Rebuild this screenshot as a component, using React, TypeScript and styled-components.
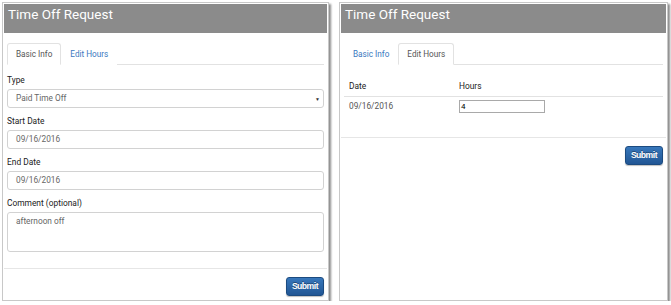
import React from "react";
import styled, { createGlobalStyle } from "styled-components";

const Global = createGlobalStyle`
  html, body { margin: 0; padding: 0; background: #fff; }
  body { font-family: Roboto, "Liberation Sans", Arial, sans-serif; }
  * { box-sizing: border-box; }
`;

const Page = styled.div`
  display: flex;
  align-items: flex-start;
  gap: 10px;
  padding: 2px 0 0 2px;
`;

const Panel = styled.div<{ $w: number }>`
  width: ${(p) => p.$w}px;
  height: 299px;
  border: 1px solid #c8c8c8;
  padding: 1px;
  background: #fff;
  box-shadow: 2px 2px 2px rgba(0, 0, 0, 0.45);
  display: flex;
  flex-direction: column;
`;

const Header = styled.div`
  height: 29px;
  background: #8b8b8b;
  color: #fff;
  font-size: 13.5px;
  font-weight: 400;
  line-height: 17px;
  padding: 2px 4px 0;
`;

const Body = styled.div`
  padding: 10px 3px 0;
`;

const Tabs = styled.div`
  display: flex;
  border-bottom: 1px solid #e2e2e2;
  height: 22px;
`;

const Tab = styled.div<{ $active?: boolean }>`
  height: 22px;
  padding: 0 8px;
  font-size: 8.2px;
  line-height: 20px;
  color: ${(p) => (p.$active ? "#555" : "#3a78c0")};
  border: 1px solid ${(p) => (p.$active ? "#e2e2e2" : "transparent")};
  border-bottom-color: ${(p) => (p.$active ? "#fff" : "transparent")};
  border-radius: 3px 3px 0 0;
  background: #fff;
`;

const Form = styled.div`
  padding: 8px 0 16px;
  display: flex;
  flex-direction: column;
  gap: 6px;
`;

const Field = styled.div`
  display: flex;
  flex-direction: column;
  gap: 2px;
`;

const Label = styled.div`
  font-size: 8.4px;
  font-weight: 400;
  color: #222;
  line-height: 14px;
`;

const Control = styled.div<{ $h?: number }>`
  position: relative;
  height: ${(p) => p.$h ?? 19}px;
  border: 1px solid #d2d2d2;
  border-radius: 3px;
  padding: 0 8px;
  font-size: 8.3px;
  line-height: 17px;
  color: #666;
`;

const Arrow = styled.span`
  position: absolute;
  right: 3px;
  top: 1px;
  font-size: 5px;
  color: #333;
`;

const Footer = styled.div`
  border-top: 1px solid #e6e6e6;
  display: flex;
  justify-content: flex-end;
  padding: 8px 3px 0;
`;

const Button = styled.div`
  height: 19px;
  padding: 0 5px;
  border: 1px solid #1c4b80;
  border-radius: 3px;
  background: linear-gradient(#3777bb, #215694);
  color: #fff;
  font-family: "Liberation Sans", Arial, sans-serif;
  font-weight: bold;
  font-size: 8.6px;
  letter-spacing: -0.5px;
  line-height: 17px;
  text-shadow: 0 -1px 0 rgba(0, 0, 0, 0.35);
  box-shadow: 0 1px 1px rgba(0, 0, 0, 0.25);
`;

const Table = styled.div`
  margin-top: 9px;
  display: grid;
  grid-template-columns: 110px 1fr;
  padding-bottom: 23px;
`;

const HeadCell = styled.div`
  font-size: 8.4px;
  font-weight: 400;
  color: #222;
  line-height: 14px;
  padding: 5px 5px 3px;
  border-bottom: 1px solid #e2e2e2;
`;

const Cell = styled.div`
  font-size: 8.3px;
  color: #555;
  line-height: 14px;
  padding: 2px 5px 0;
  height: 17px;
`;

const HoursInput = styled.div`
  width: 86px;
  height: 13px;
  border: 1px solid #a9a9a9;
  font-size: 8px;
  line-height: 11px;
  color: #000;
  padding-left: 1px;
  margin-top: 1px;
`;

export default function App() {
  return (
    <>
      <Global />
      <Page>
        <Panel $w={327}>
          <Header>Time Off Request</Header>
          <Body>
            <Tabs>
              <Tab $active>Basic Info</Tab>
              <Tab>Edit Hours</Tab>
            </Tabs>
            <Form>
              <Field>
                <Label>Type</Label>
                <Control>
                  Paid Time Off
                  <Arrow>▼</Arrow>
                </Control>
              </Field>
              <Field>
                <Label>Start Date</Label>
                <Control>09/16/2016</Control>
              </Field>
              <Field>
                <Label>End Date</Label>
                <Control>09/16/2016</Control>
              </Field>
              <Field>
                <Label>Comment (optional)</Label>
                <Control $h={40}>afternoon off</Control>
              </Field>
            </Form>
          </Body>
          <Footer>
            <Button>Submit</Button>
          </Footer>
        </Panel>
        <Panel $w={329}>
          <Header>Time Off Request</Header>
          <Body>
            <Tabs>
              <Tab>Basic Info</Tab>
              <Tab $active>Edit Hours</Tab>
            </Tabs>
            <Table>
              <HeadCell>Date</HeadCell>
              <HeadCell>Hours</HeadCell>
              <Cell>09/16/2016</Cell>
              <Cell>
                <HoursInput>4</HoursInput>
              </Cell>
            </Table>
          </Body>
          <Footer>
            <Button>Submit</Button>
          </Footer>
        </Panel>
      </Page>
    </>
  );
}
